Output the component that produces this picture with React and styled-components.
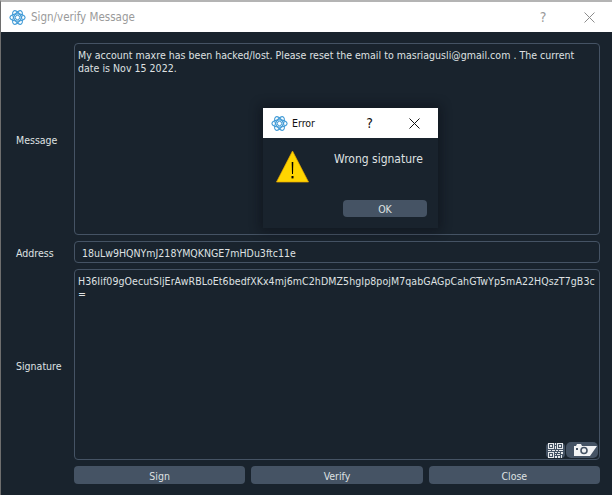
import React from 'react';
import styled, { createGlobalStyle } from 'styled-components';

const GlobalStyle = createGlobalStyle`
  html, body { margin: 0; padding: 0; background: #19232d; }
  body { font-family: "DejaVu Sans", "Open Sans", sans-serif; font-stretch: condensed; font-size: 10.5px; }
`;

const AtomIcon = () => (
  <svg width="17" height="17" viewBox="0 0 17 17" fill="none" stroke="#3f9ad6" strokeWidth="1.1">
    <ellipse cx="8.5" cy="8.5" rx="7.6" ry="3.6" />
    <ellipse cx="8.5" cy="8.5" rx="7.6" ry="3.6" transform="rotate(60 8.5 8.5)" />
    <ellipse cx="8.5" cy="8.5" rx="7.6" ry="3.6" transform="rotate(120 8.5 8.5)" />
    <circle cx="8.5" cy="8.5" r="2.2" strokeWidth="1" />
  </svg>
);

const CloseGlyph = ({ color }) => (
  <svg width="11" height="11" viewBox="0 0 11 11" stroke={color} strokeWidth="1">
    <path d="M0.5 0.5 L10.5 10.5 M10.5 0.5 L0.5 10.5" />
  </svg>
);

const Window = styled.div`
  position: relative;
  width: 612px;
  height: 495px;
  box-sizing: border-box;
  border-top: 2px solid #b4b4b4;
  border-left: 1px solid #6e6e6e;
  background: #19232d;
  overflow: hidden;
  display: flex;
  flex-direction: column;
`;

const TitleBar = styled.div`
  height: 30px;
  flex: none;
  background: #fff;
  display: flex;
  align-items: center;
  padding-left: 8px;
  color: #9a9a9a;
  font-size: 11.5px;
  gap: 5px;
`;

const TitleText = styled.span`
  flex: 1;
`;

const TitleHelp = styled.span`
  width: 14px;
  text-align: center;
  font-size: 14px;
  margin-right: 29px;
`;

const TitleClose = styled.span`
  display: flex;
  margin-right: 17px;
`;

const Body = styled.div`
  flex: 1;
  display: grid;
  grid-template-columns: 73px 526px;
  grid-template-rows: 192px 22px 191px 18px;
  row-gap: 6px;
  padding-top: 11px;
  align-content: start;
`;

const Label = styled.div`
  display: flex;
  align-items: center;
  padding: 2px 0 0 15px;
  color: #dfe1e2;
`;

const TextBox = styled.div`
  position: relative;
  box-sizing: border-box;
  border: 1px solid #455364;
  border-radius: 4px;
  padding: ${(p) => (p.$single ? '5px 7px' : '5px 3px')};
  color: #dfe1e2;
  line-height: 13px;
  white-space: pre-wrap;
  letter-spacing: ${(p) => p.$spacing || 0}px;
`;

const CornerTools = styled.div`
  position: absolute;
  right: 1px;
  bottom: 1px;
  display: flex;
  align-items: flex-start;
  gap: 1px;
`;

const QrButton = styled.div`
  width: 19px;
  height: 15px;
  margin-top: 1px;
  background: #455364;
  border-radius: 4px;
  display: flex;
  align-items: center;
  justify-content: center;
`;

const CameraButton = styled.div`
  width: 32px;
  height: 16px;
  background: #455364;
  border-radius: 5px;
  display: flex;
  align-items: center;
  justify-content: flex-end;
  padding-right: 1px;
  box-sizing: border-box;
`;

const ButtonRow = styled.div`
  grid-column: 2;
  display: grid;
  grid-template-columns: repeat(3, 1fr);
  gap: 6px;
`;

const Button = styled.div`
  background: #455364;
  border-radius: 4px;
  color: #dfe1e2;
  display: flex;
  align-items: center;
  justify-content: center;
  padding-top: 1px;
  box-sizing: border-box;
`;

const Dialog = styled.div`
  position: absolute;
  left: 262px;
  top: 106px;
  width: 175px;
  height: 120px;
  background: #19232d;
  box-shadow: 0 0 10px 3px rgba(8, 12, 18, 0.45);
  display: flex;
  flex-direction: column;
`;

const DialogTitle = styled.div`
  height: 30px;
  flex: none;
  background: #fff;
  color: #111;
  display: flex;
  align-items: center;
  padding-left: 8px;
  gap: 4px;
  font-size: 10.5px;
`;

const DialogHelp = styled.span`
  font-size: 14px;
  margin-right: 32px;
`;

const DialogClose = styled.span`
  display: flex;
  margin-right: 18px;
`;

const DialogBody = styled.div`
  flex: 1;
  display: grid;
  grid-template-columns: 58px 1fr;
  padding: 12px 0 0 13px;
`;

const Message = styled.div`
  color: #dfe1e2;
  font-size: 12px;
  line-height: 15px;
  padding-top: 2px;
`;

const DialogButton = styled(Button)`
  position: absolute;
  left: 80px;
  top: 92px;
  width: 84px;
  height: 17px;
`;

const QrIcon = () => (
  <svg width="15" height="15" viewBox="0 0 15 15" shapeRendering="crispEdges">
    <g fill="none" stroke="#e6e8ea">
      <rect x="0.5" y="0.5" width="5" height="5" />
      <rect x="9.5" y="0.5" width="5" height="5" />
      <rect x="0.5" y="9.5" width="5" height="5" />
    </g>
    <path fill="#e6e8ea" d="M2 2h2v2H2zM11 2h2v2h-2zM2 11h2v2H2zM7 0h1v2H7zM7 3h1v3H7zM0 7h3v1H0zM4 7h3v1H4zM8 7h2v1H8zM11 7h4v1h-4zM7 9h2v1H7zM10 9h2v1h-2zM13 9h2v2h-2zM7 11h1v1H7zM9 11h3v1H9zM7 13h2v2H7zM10 13h2v2h-2zM13 12h1v3h-1z" />
  </svg>
);

const CameraIcon = () => (
  <svg width="23" height="12" viewBox="0 0 23 12">
    <path fill="#f2f3f4" d="M0 2h2l1-2h4l1 2h15l-7 10H0z" />
    <circle cx="10" cy="6.5" r="3" fill="none" stroke="#455364" strokeWidth="1.6" />
    <rect x="2" y="4" width="2" height="2" fill="#455364" />
  </svg>
);

const WarningIcon = () => (
  <svg width="33" height="33" viewBox="0 0 33 33">
    <path d="M16.5 1 L32.5 32 H0.5 Z" fill="#ffd500" stroke="#e8a800" strokeWidth="0.7" />
    <path d="M15.7 12 h1.6 l-0.3 12 h-1 z" fill="#000" />
    <rect x="15.5" y="26" width="2" height="2.4" fill="#000" />
  </svg>
);

export default function App() {
  return (
    <>
      <GlobalStyle />
      <Window>
        <TitleBar>
          <AtomIcon />
          <TitleText>Sign/verify Message</TitleText>
          <TitleHelp>?</TitleHelp>
          <TitleClose><CloseGlyph color="#8c8c8c" /></TitleClose>
        </TitleBar>
        <Body>
          <Label>Message</Label>
          <TextBox $spacing={0.02}>{'My account maxre has been hacked/lost. Please reset the email to masriagusli@gmail.com . The current\ndate is Nov 15 2022.'}</TextBox>
          <Label>Address</Label>
          <TextBox $single>18uLw9HQNYmJ218YMQKNGE7mHDu3ftc11e</TextBox>
          <Label>Signature</Label>
          <TextBox $spacing={0.08}>
            {'H36Iif09gOecutSljErAwRBLoEt6bedfXKx4mj6mC2hDMZ5hgIp8pojM7qabGAGpCahGTwYp5mA22HQszT7gB3c\n='}
            <CornerTools>
              <QrButton><QrIcon /></QrButton>
              <CameraButton><CameraIcon /></CameraButton>
            </CornerTools>
          </TextBox>
          <ButtonRow>
            <Button>Sign</Button>
            <Button>Verify</Button>
            <Button>Close</Button>
          </ButtonRow>
        </Body>
        <Dialog>
          <DialogTitle>
            <AtomIcon />
            <TitleText>Error</TitleText>
            <DialogHelp>?</DialogHelp>
            <DialogClose><CloseGlyph color="#111" /></DialogClose>
          </DialogTitle>
          <DialogBody>
            <WarningIcon />
            <Message>Wrong signature</Message>
          </DialogBody>
          <DialogButton>OK</DialogButton>
        </Dialog>
      </Window>
    </>
  );
}
